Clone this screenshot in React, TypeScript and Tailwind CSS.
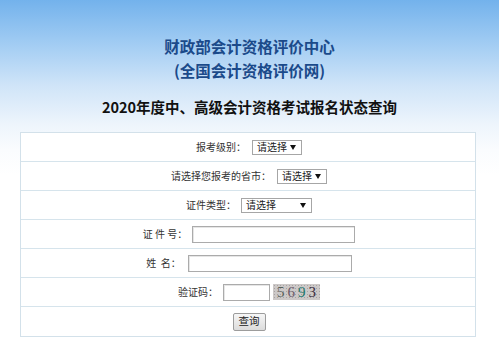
import React from "react";

const cjk = { fontFamily: '"Noto Sans CJK SC", "Noto Sans", sans-serif' };

function Select({ width }: { width: number }) {
  return (
    <div
      className="flex h-[15px] items-center justify-between border border-[#a6a6a6] bg-white pl-[4px] pr-[5px] text-[10px] leading-none text-[#222]"
      style={{ width }}
    >
      <span>请选择</span>
      <span className="h-0 w-0 border-l-[3px] border-r-[3px] border-t-[5px] border-l-transparent border-r-transparent border-t-[#111]" />
    </div>
  );
}

function Input({ width }: { width: number }) {
  return (
    <div
      className="h-[17px] border border-[#ababab] bg-white shadow-[inset_1px_1px_0_#e6e6e6]"
      style={{ width }}
    />
  );
}

function Row({ children, last }: { children: React.ReactNode; last?: boolean }) {
  return (
    <div
      className={
        "flex h-[29px] items-center justify-center " +
        (last ? "" : "border-b border-[#d6e4ec]")
      }
    >
      {children}
    </div>
  );
}

function Label({ children }: { children: React.ReactNode }) {
  return (
    <span className="whitespace-pre text-[10px] leading-none text-[#333]">{children}</span>
  );
}

export default function App() {
  return (
    <div
      className="h-[363px] w-[499px] overflow-hidden bg-[linear-gradient(to_bottom,#73b2ec_0px,#a3cdf3_45px,#cfe4f8_85px,#eef5fc_125px,#fafcfe_150px,#ffffff_175px)]"
      style={cjk}
    >
      <div className="flex flex-col items-center pt-[34px]">
        <div className="text-[15.5px] font-bold leading-[24px] text-[#1b4a8a]">
          财政部会计资格评价中心
        </div>
        <div className="text-[15.5px] font-bold leading-[24px] text-[#1b4a8a]">
          (全国会计资格评价网)
        </div>
        <div className="mt-[15px] text-[14.5px] font-bold leading-[20px] text-[#111]">
          2020年度中、高级会计资格考试报名状态查询
        </div>
      </div>
      <div className="ml-[20px] mt-[15px] w-[456px] border border-[#d3e1ea] bg-white">
        <Row>
          <div className="ml-[2px] flex items-center gap-[6px]">
            <Label>报考级别：</Label>
            <Select width={50} />
          </div>
        </Row>
        <Row>
          <div className="ml-[2px] flex items-center gap-[6px]">
            <Label>请选择您报考的省市：</Label>
            <Select width={50} />
          </div>
        </Row>
        <Row>
          <div className="ml-[2px] flex items-center gap-[5px]">
            <Label>证件类型：</Label>
            <Select width={71} />
          </div>
        </Row>
        <Row>
          <div className="ml-[2px] flex items-center gap-[5px]">
            <Label>{"证 件 号："}</Label>
            <Input width={163} />
          </div>
        </Row>
        <Row>
          <div className="ml-[2px] flex items-center gap-[7px]">
            <Label>{"姓  名："}</Label>
            <Input width={164} />
          </div>
        </Row>
        <Row>
          <div className="ml-[2px] flex items-center">
            <Label>验证码：</Label>
            <div className="ml-[5px]">
              <Input width={47} />
            </div>
            <div
              className="ml-[3px] flex h-[16px] w-[47px] items-center justify-center gap-[3px] bg-[#ccc8c7] bg-[radial-gradient(#a7a3a3_0.7px,transparent_1px)] bg-[length:3px_3px] text-[15px] leading-none"
              style={{ fontFamily: '"Liberation Serif", "DejaVu Serif", serif' }}
            >
              <span className="text-[#56615a]">5</span>
              <span className="text-[#6a5a6a]">6</span>
              <span className="text-[#22786e]">9</span>
              <span className="text-[#3a2c3c]">3</span>
            </div>
          </div>
        </Row>
        <Row last>
          <div className="ml-[2px] flex h-[18px] w-[33px] items-center justify-center rounded-[2px] border border-[#9c9c9c] bg-[linear-gradient(to_bottom,#f6f6f6,#dcdcdc)] text-[10.5px] leading-none text-[#222]">
            查询
          </div>
        </Row>
      </div>
    </div>
  );
}
